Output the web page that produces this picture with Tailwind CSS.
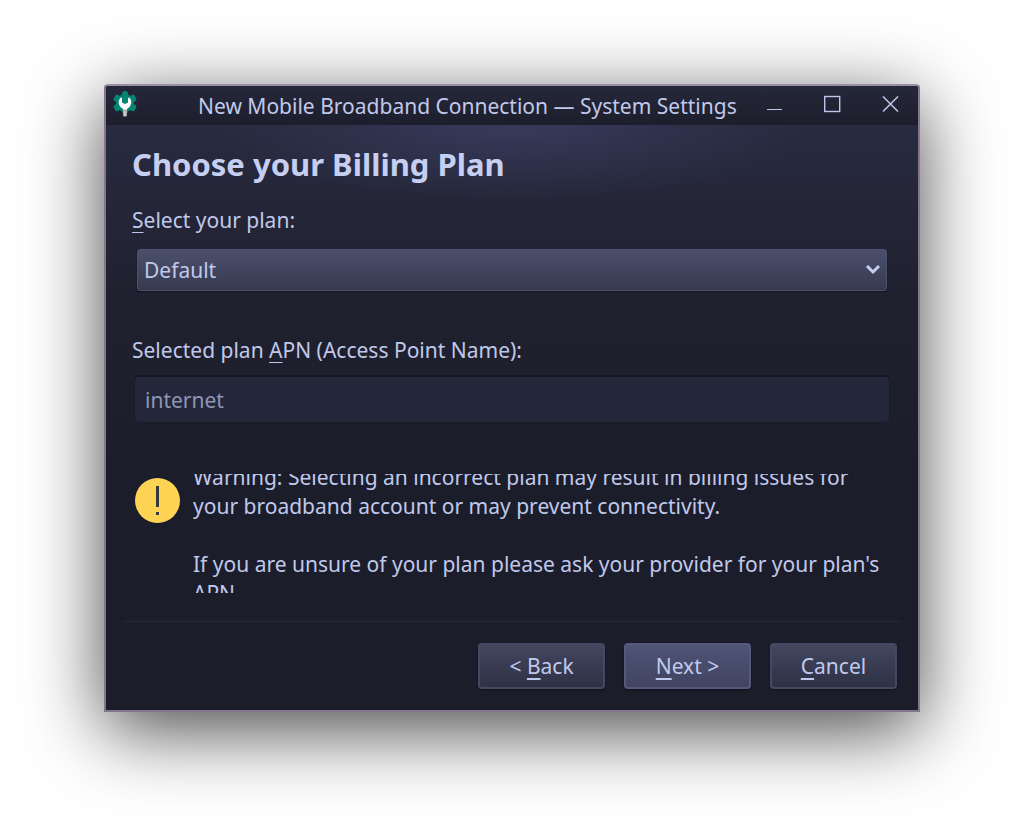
<!DOCTYPE html>
<html lang="en">
<head>
<meta charset="utf-8">
<meta name="viewport" content="width=device-width, initial-scale=1">
<title>New Mobile Broadband Connection — System Settings</title>
<script src="https://cdn.jsdelivr.net/npm/@tailwindcss/browser@4"></script>
</head>
<body class="min-h-screen overflow-x-hidden bg-white px-[104px] py-[84px] font-['Noto_Sans',sans-serif] text-[21px] leading-[29px] text-[#c0c9eb]">
<main class="overflow-hidden rounded-t-[4px] border-2 border-[#84768f] border-t-[#9c8fa3] bg-[#1c1d2b] shadow-[0_18px_76px_rgba(0,0,0,0.72)]">
  <header class="flex h-[39px] items-center bg-linear-to-b from-[#25283a] to-[#1d1e2c] pl-1.5 pr-4">
    <svg class="mb-1 size-[26px] shrink-0" viewBox="0 0 26 26" aria-hidden="true">
      <g fill="#068472">
        <circle cx="13" cy="12" r="9"/>
        <rect x="10" y="0" width="6" height="23" rx="3"/>
        <rect x="9.500" y="0" width="7" height="24" rx="2" transform="rotate(60 13 12)"/>
        <rect x="9.500" y="0" width="7" height="24" rx="2" transform="rotate(120 13 12)"/>
      </g>
      <path d="M9 6.500C6 9 6 13 8.500 16L11 18V20H15V18L17.500 16C20 13 20 9 17 6.500L16 7V11.500L13 13L10 11.500V7Z" fill="#fff"/>
      <rect x="11" y="18.500" width="4" height="7" rx="1" fill="#aaa9a5"/>
      <path d="M13 20V25" stroke="#e8e8e8"/>
    </svg>
    <h1 class="ml-[60px] flex-1 whitespace-nowrap pt-0.5">New Mobile Broadband Connection — System Settings</h1>
    <div class="mb-0.5 flex gap-9">
      <button type="button" aria-label="Minimize" class="h-6 w-[22px]"><svg viewBox="0 0 22 24" class="h-6 w-[22px]" fill="none" stroke="#bcc5ea"><path d="M3 16.500H18"/></svg></button>
      <button type="button" aria-label="Maximize" class="h-6 w-[22px]"><svg viewBox="0 0 22 24" class="h-6 w-[22px]" fill="none" stroke="#bcc5ea" stroke-width="1.400"><rect x="2.700" y="3.500" width="15" height="15"/></svg></button>
      <button type="button" aria-label="Close" class="h-6 w-[22px]"><svg viewBox="0 0 22 24" class="h-6 w-[22px]" fill="none" stroke="#bcc5ea" stroke-width="1.600"><path d="M3 3.500L18 18.500M18 3.500L3 18.500"/></svg></button>
    </div>
  </header>

  <form class="bg-[radial-gradient(ellipse_300px_75px_at_50%_0%,#373a5a,transparent),linear-gradient(#282a3f,#20212f_30%,#1c1d2b_60%)] pt-[17px]">
    <div class="px-[26px]">
      <h2 class="text-[31px] font-bold leading-[44px] text-[#c6cff2]">Choose your Billing Plan</h2>
      <label for="plan" class="mt-5 block"><span class="underline decoration-1 underline-offset-4">S</span>elect your plan:</label>
      <div class="relative mx-[5px] mt-[14px]">
        <select id="plan" class="block h-[42px] w-full appearance-none rounded-[3px] border border-[#4d5171] bg-linear-to-b from-[#4b4f6c] to-[#373a4f] px-1.5 shadow-[0_1px_2px_rgba(0,0,0,0.4)]"><option>Default</option></select>
        <svg class="pointer-events-none absolute right-[6px] top-[14px] h-[14px] w-[16px]" viewBox="0 0 16 14" fill="none" stroke="#c6cff2" stroke-width="3" aria-hidden="true"><path d="M2 3L8 9L14 3"/></svg>
      </div>
      <label for="apn" class="mt-[45px] block">Selected plan <span class="underline decoration-1 underline-offset-4">A</span>PN (Access Point Name):</label>
      <div class="mx-[2px] mt-[10px]">
        <input id="apn" type="text" value="internet" readonly class="block h-[48px] w-full rounded-[4px] border border-t-2 border-[#1a1b28] border-t-[#161722] bg-[#24273a] px-[10px] pt-px text-[#8f96b3]">
      </div>
      <div class="mt-[51px] flex gap-[13px]">
        <svg class="ml-[3px] mt-1 size-[45px] shrink-0" viewBox="0 0 45 45" role="img" aria-label="Warning"><circle cx="22.500" cy="22.500" r="22.500" fill="#ffd454"/><path d="M22.500 8V29M22.500 34V37" stroke="#373a3c" stroke-width="3"/></svg>
        <div class="flex h-[119px] flex-1 flex-col justify-center overflow-hidden">
          <p class="mt-1 shrink-0">Warning: Selecting an incorrect plan may result in billing issues for your broadband account or may prevent connectivity.<br><br>If you are unsure of your plan please ask your provider for your plan's APN.</p>
        </div>
      </div>
    </div>
    <hr class="mx-[17px] mt-7 border-t border-[#26283a]">
    <div class="flex justify-end gap-[19px] px-[21px] pb-[21px] pt-[21px]">
      <button type="button" class="h-[46px] w-[127px] rounded-[4px] border-2 border-[#444863] bg-linear-to-b from-[#424660] to-[#2f3244] shadow-[0_1px_2px_rgba(0,0,0,0.4)]">&lt; <span class="underline decoration-2 underline-offset-4">B</span>ack</button>
      <button type="submit" class="h-[46px] w-[127px] rounded-[4px] border-2 border-[#555a7c] bg-linear-to-b from-[#505475] to-[#404361] shadow-[0_1px_2px_rgba(0,0,0,0.4)]"><span class="underline decoration-2 underline-offset-4">N</span>ext &gt;</button>
      <button type="button" class="h-[46px] w-[127px] rounded-[4px] border-2 border-[#444863] bg-linear-to-b from-[#424660] to-[#2f3244] shadow-[0_1px_2px_rgba(0,0,0,0.4)]"><span class="underline decoration-2 underline-offset-4">C</span>ancel</button>
    </div>
  </form>
</main>
</body>
</html>
